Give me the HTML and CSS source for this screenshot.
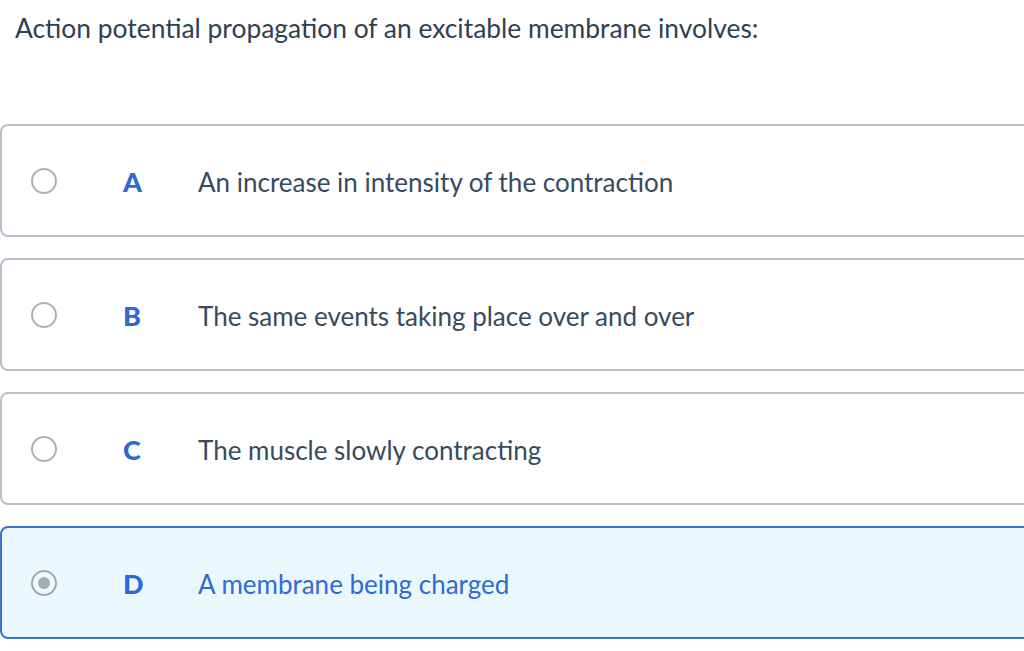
FILE: index.html
```html
<!DOCTYPE html>
<html lang="en">
<head>
    <meta charset="UTF-8">
    <meta name="viewport" content="width=device-width, initial-scale=1.0">
    <title>Question</title>
    <link rel="stylesheet" href="styles.css">
</head>
<body>
    <h2 class="question">Action potential propagation of an excitable membrane involves:</h2>

    <ul class="options">
        <li class="option">
            <span class="radio"></span>
            <span class="letter">A</span>
            <span class="answer">An increase in intensity of the contraction</span>
        </li>
        <li class="option">
            <span class="radio"></span>
            <span class="letter">B</span>
            <span class="answer">The same events taking place over and over</span>
        </li>
        <li class="option">
            <span class="radio"></span>
            <span class="letter">C</span>
            <span class="answer">The muscle slowly contracting</span>
        </li>
        <li class="option selected">
            <span class="radio"></span>
            <span class="letter">D</span>
            <span class="answer">A membrane being charged</span>
        </li>
    </ul>
</body>
</html>
```

FILE: styles.css
```css
body {
    font-family: 'Lato', 'Open Sans', sans-serif;
    background-color: #fff;
    margin: 0;
    padding: 0;
    color: #34495c;
    overflow-x: hidden;
}

.question {
    margin: 0;
    padding: 12px 15px 0;
    font-size: 26.4px;
    font-weight: 400;
    line-height: 32px;
    color: #2e4151;
}

.options {
    list-style: none;
    margin: 80px -12px 0 0;
    padding: 0;
    display: flex;
    flex-direction: column;
    gap: 21px;
}

.option {
    display: flex;
    align-items: center;
    height: 113px;
    box-sizing: border-box;
    border: 2px solid #b6c0ca;
    border-radius: 8px;
    background-color: #fff;
    padding: 2px 0 0 29px;
}

.radio {
    width: 26px;
    height: 26px;
    box-sizing: border-box;
    border: 2.5px solid #a9b3bc;
    border-radius: 50%;
    flex-shrink: 0;
    margin-top: -2px;
    display: flex;
    align-items: center;
    justify-content: center;
}

.letter {
    width: 75px;
    flex-shrink: 0;
    margin-left: 66px;
    font-weight: 900;
    font-size: 27px;
    color: #2d68d3;
}

.answer {
    font-size: 26px;
    color: #364b5e;
}

.option.selected {
    background-color: #eaf8fe;
    border-color: #3a72d6;
}

.option.selected .radio {
    border-color: #a3a7ab;
}

.option.selected .radio::after {
    content: "";
    width: 12px;
    height: 12px;
    border-radius: 50%;
    background-color: #a9abae;
}

.option.selected .answer {
    color: #2f6bd3;
}
```
